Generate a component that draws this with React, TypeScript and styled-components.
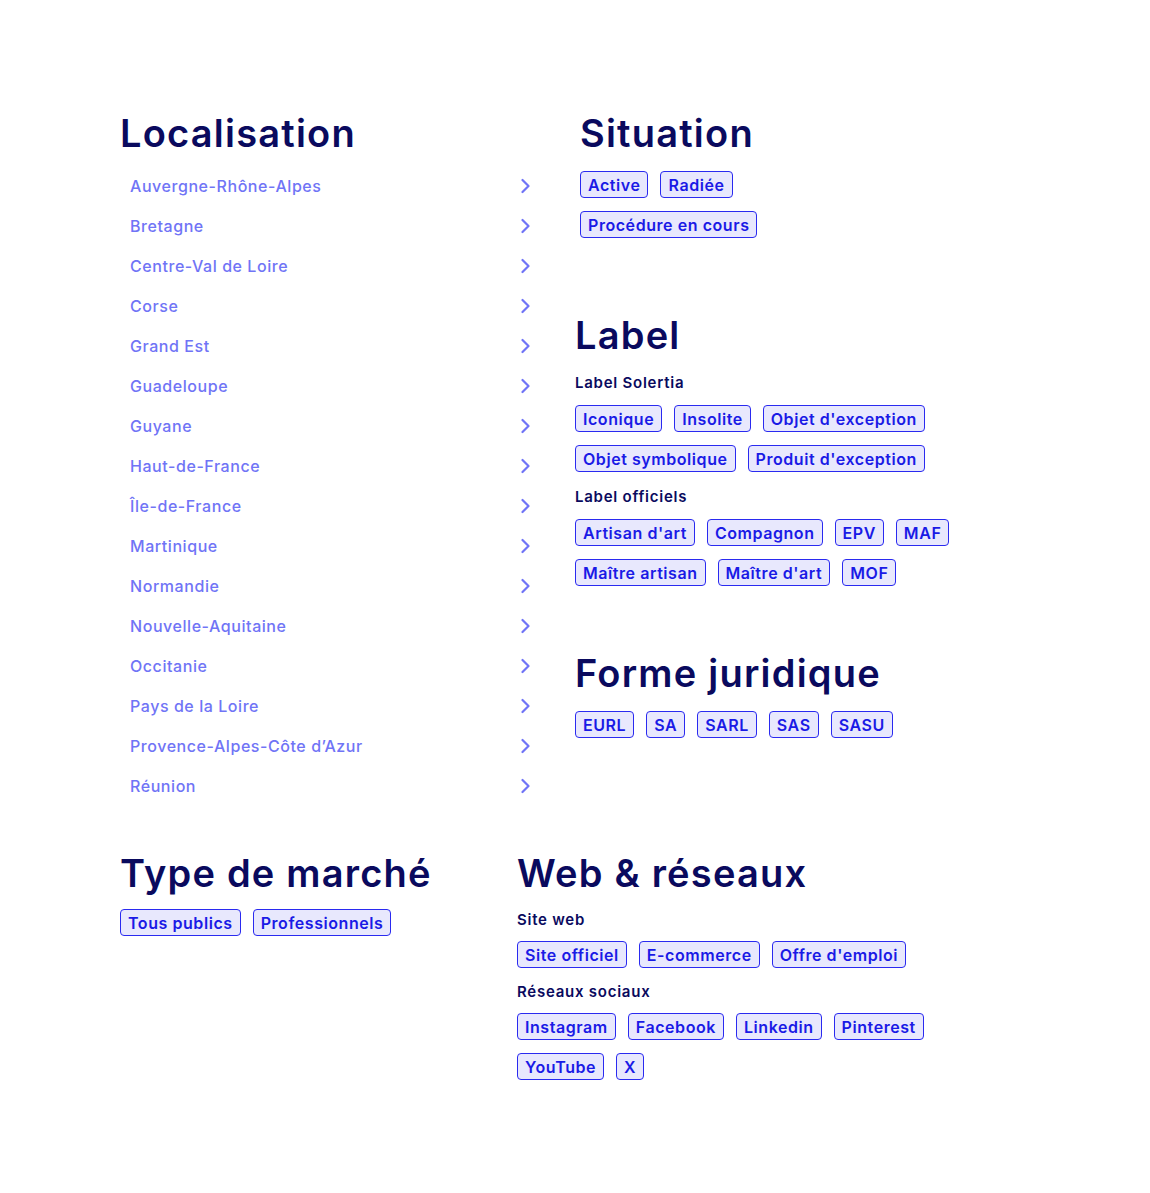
import React from 'react';
import styled, { createGlobalStyle } from 'styled-components';

const GlobalStyle = createGlobalStyle`
  body {
    margin: 0;
    background: #ffffff;
    font-family: Inter, "Open Sans", sans-serif;
  }
`;

const Page = styled.main`
  padding: 110px 0 100px 120px;
  display: flex;
  flex-direction: column;
`;

const TopRow = styled.div`
  display: flex;
  align-items: flex-start;
`;

const BottomRow = styled.div`
  display: flex;
  align-items: flex-start;
  margin-top: 44px;
`;

const LeftColumn = styled.section<{ $width: number }>`
  width: ${(p) => p.$width}px;
  flex-shrink: 0;
`;

const RightColumn = styled.div`
  display: flex;
  flex-direction: column;
  margin-left: 40px;
`;

const Block = styled.section<{ $top?: number; $indent?: number }>`
  margin-top: ${(p) => p.$top ?? 0}px;
  margin-left: ${(p) => p.$indent ?? 0}px;
`;

const Heading = styled.h2`
  margin: 0;
  font-size: 38px;
  line-height: 46px;
  font-weight: 600;
  letter-spacing: 0.032em;
  color: #0a0a5e;
`;

const SubHeading = styled.h3<{ $tight?: boolean }>`
  margin: ${(p) => (p.$tight ? '14px 0 11px' : '15px 0 12px')};
  font-size: 15px;
  line-height: 20px;
  font-weight: 600;
  letter-spacing: 0.05em;
  color: #0a0a5e;
`;

const RegionList = styled.ul`
  list-style: none;
  margin: 10px 0 0;
  padding: 0;
`;

const RegionRow = styled.li`
  display: flex;
  align-items: center;
  justify-content: space-between;
  height: 40px;
  padding: 0 5px 0 10px;
  font-size: 16px;
  font-weight: 500;
  letter-spacing: 0.035em;
  color: #7074f6;
  cursor: pointer;
`;

const Chevron = styled.svg`
  width: 10px;
  height: 16px;
  flex-shrink: 0;
  color: #7074f6;
`;

const ChipGrid = styled.div<{ $top?: number }>`
  display: flex;
  flex-direction: column;
  gap: 13px;
  margin-top: ${(p) => p.$top ?? 0}px;
`;

const ChipRow = styled.div`
  display: flex;
  gap: 12px;
`;

const Chip = styled.button`
  display: inline-flex;
  align-items: center;
  height: 27px;
  padding: 0 7px;
  box-sizing: border-box;
  border: 1px solid #2a2af0;
  border-radius: 4px;
  background: #e8e8fd;
  color: #1a1ae6;
  font-family: inherit;
  font-size: 16px;
  font-weight: 600;
  letter-spacing: 0.035em;
  white-space: nowrap;
  cursor: pointer;
`;

const regions = [
  'Auvergne-Rhône-Alpes',
  'Bretagne',
  'Centre-Val de Loire',
  'Corse',
  'Grand Est',
  'Guadeloupe',
  'Guyane',
  'Haut-de-France',
  'Île-de-France',
  'Martinique',
  'Normandie',
  'Nouvelle-Aquitaine',
  'Occitanie',
  'Pays de la Loire',
  'Provence-Alpes-Côte d’Azur',
  'Réunion',
];

const Chips: React.FC<{ rows: string[][]; top?: number }> = ({ rows, top }) => (
  <ChipGrid $top={top}>
    {rows.map((row, i) => (
      <ChipRow key={i}>
        {row.map((item) => (
          <Chip key={item}>{item}</Chip>
        ))}
      </ChipRow>
    ))}
  </ChipGrid>
);

const App: React.FC = () => {
  return (
    <>
      <GlobalStyle />
      <Page>
        <TopRow>
          <LeftColumn $width={415}>
            <Heading>Localisation</Heading>
            <RegionList>
              {regions.map((r) => (
                <RegionRow key={r}>
                  {r}
                  <Chevron viewBox="0 0 10 16" fill="none" stroke="currentColor" strokeWidth={2.2} strokeLinecap="round" strokeLinejoin="round">
                    <path d="M2.5 2 L8.5 8 L2.5 14" />
                  </Chevron>
                </RegionRow>
              ))}
            </RegionList>
          </LeftColumn>

          <RightColumn>
            <Block $indent={5}>
              <Heading>Situation</Heading>
              <Chips top={15} rows={[['Active', 'Radiée'], ['Procédure en cours']]} />
            </Block>

            <Block $top={74}>
              <Heading>Label</Heading>
              <SubHeading>Label Solertia</SubHeading>
              <Chips
                rows={[
                  ['Iconique', 'Insolite', "Objet d'exception"],
                  ['Objet symbolique', "Produit d'exception"],
                ]}
              />
              <SubHeading>Label officiels</SubHeading>
              <Chips
                rows={[
                  ["Artisan d'art", 'Compagnon', 'EPV', 'MAF'],
                  ['Maître artisan', "Maître d'art", 'MOF'],
                ]}
              />
            </Block>

            <Block $top={64}>
              <Heading>Forme juridique</Heading>
              <Chips top={15} rows={[['EURL', 'SA', 'SARL', 'SAS', 'SASU']]} />
            </Block>
          </RightColumn>
        </TopRow>

        <BottomRow>
          <LeftColumn $width={397}>
            <Heading>Type de marché</Heading>
            <Chips top={13} rows={[['Tous publics', 'Professionnels']]} />
          </LeftColumn>

          <Block>
            <Heading>Web &amp; réseaux</Heading>
            <SubHeading $tight>Site web</SubHeading>
            <Chips rows={[['Site officiel', 'E-commerce', "Offre d'emploi"]]} />
            <SubHeading $tight>Réseaux sociaux</SubHeading>
            <Chips rows={[['Instagram', 'Facebook', 'Linkedin', 'Pinterest'], ['YouTube', 'X']]} />
          </Block>
        </BottomRow>
      </Page>
    </>
  );
};

export default App;
